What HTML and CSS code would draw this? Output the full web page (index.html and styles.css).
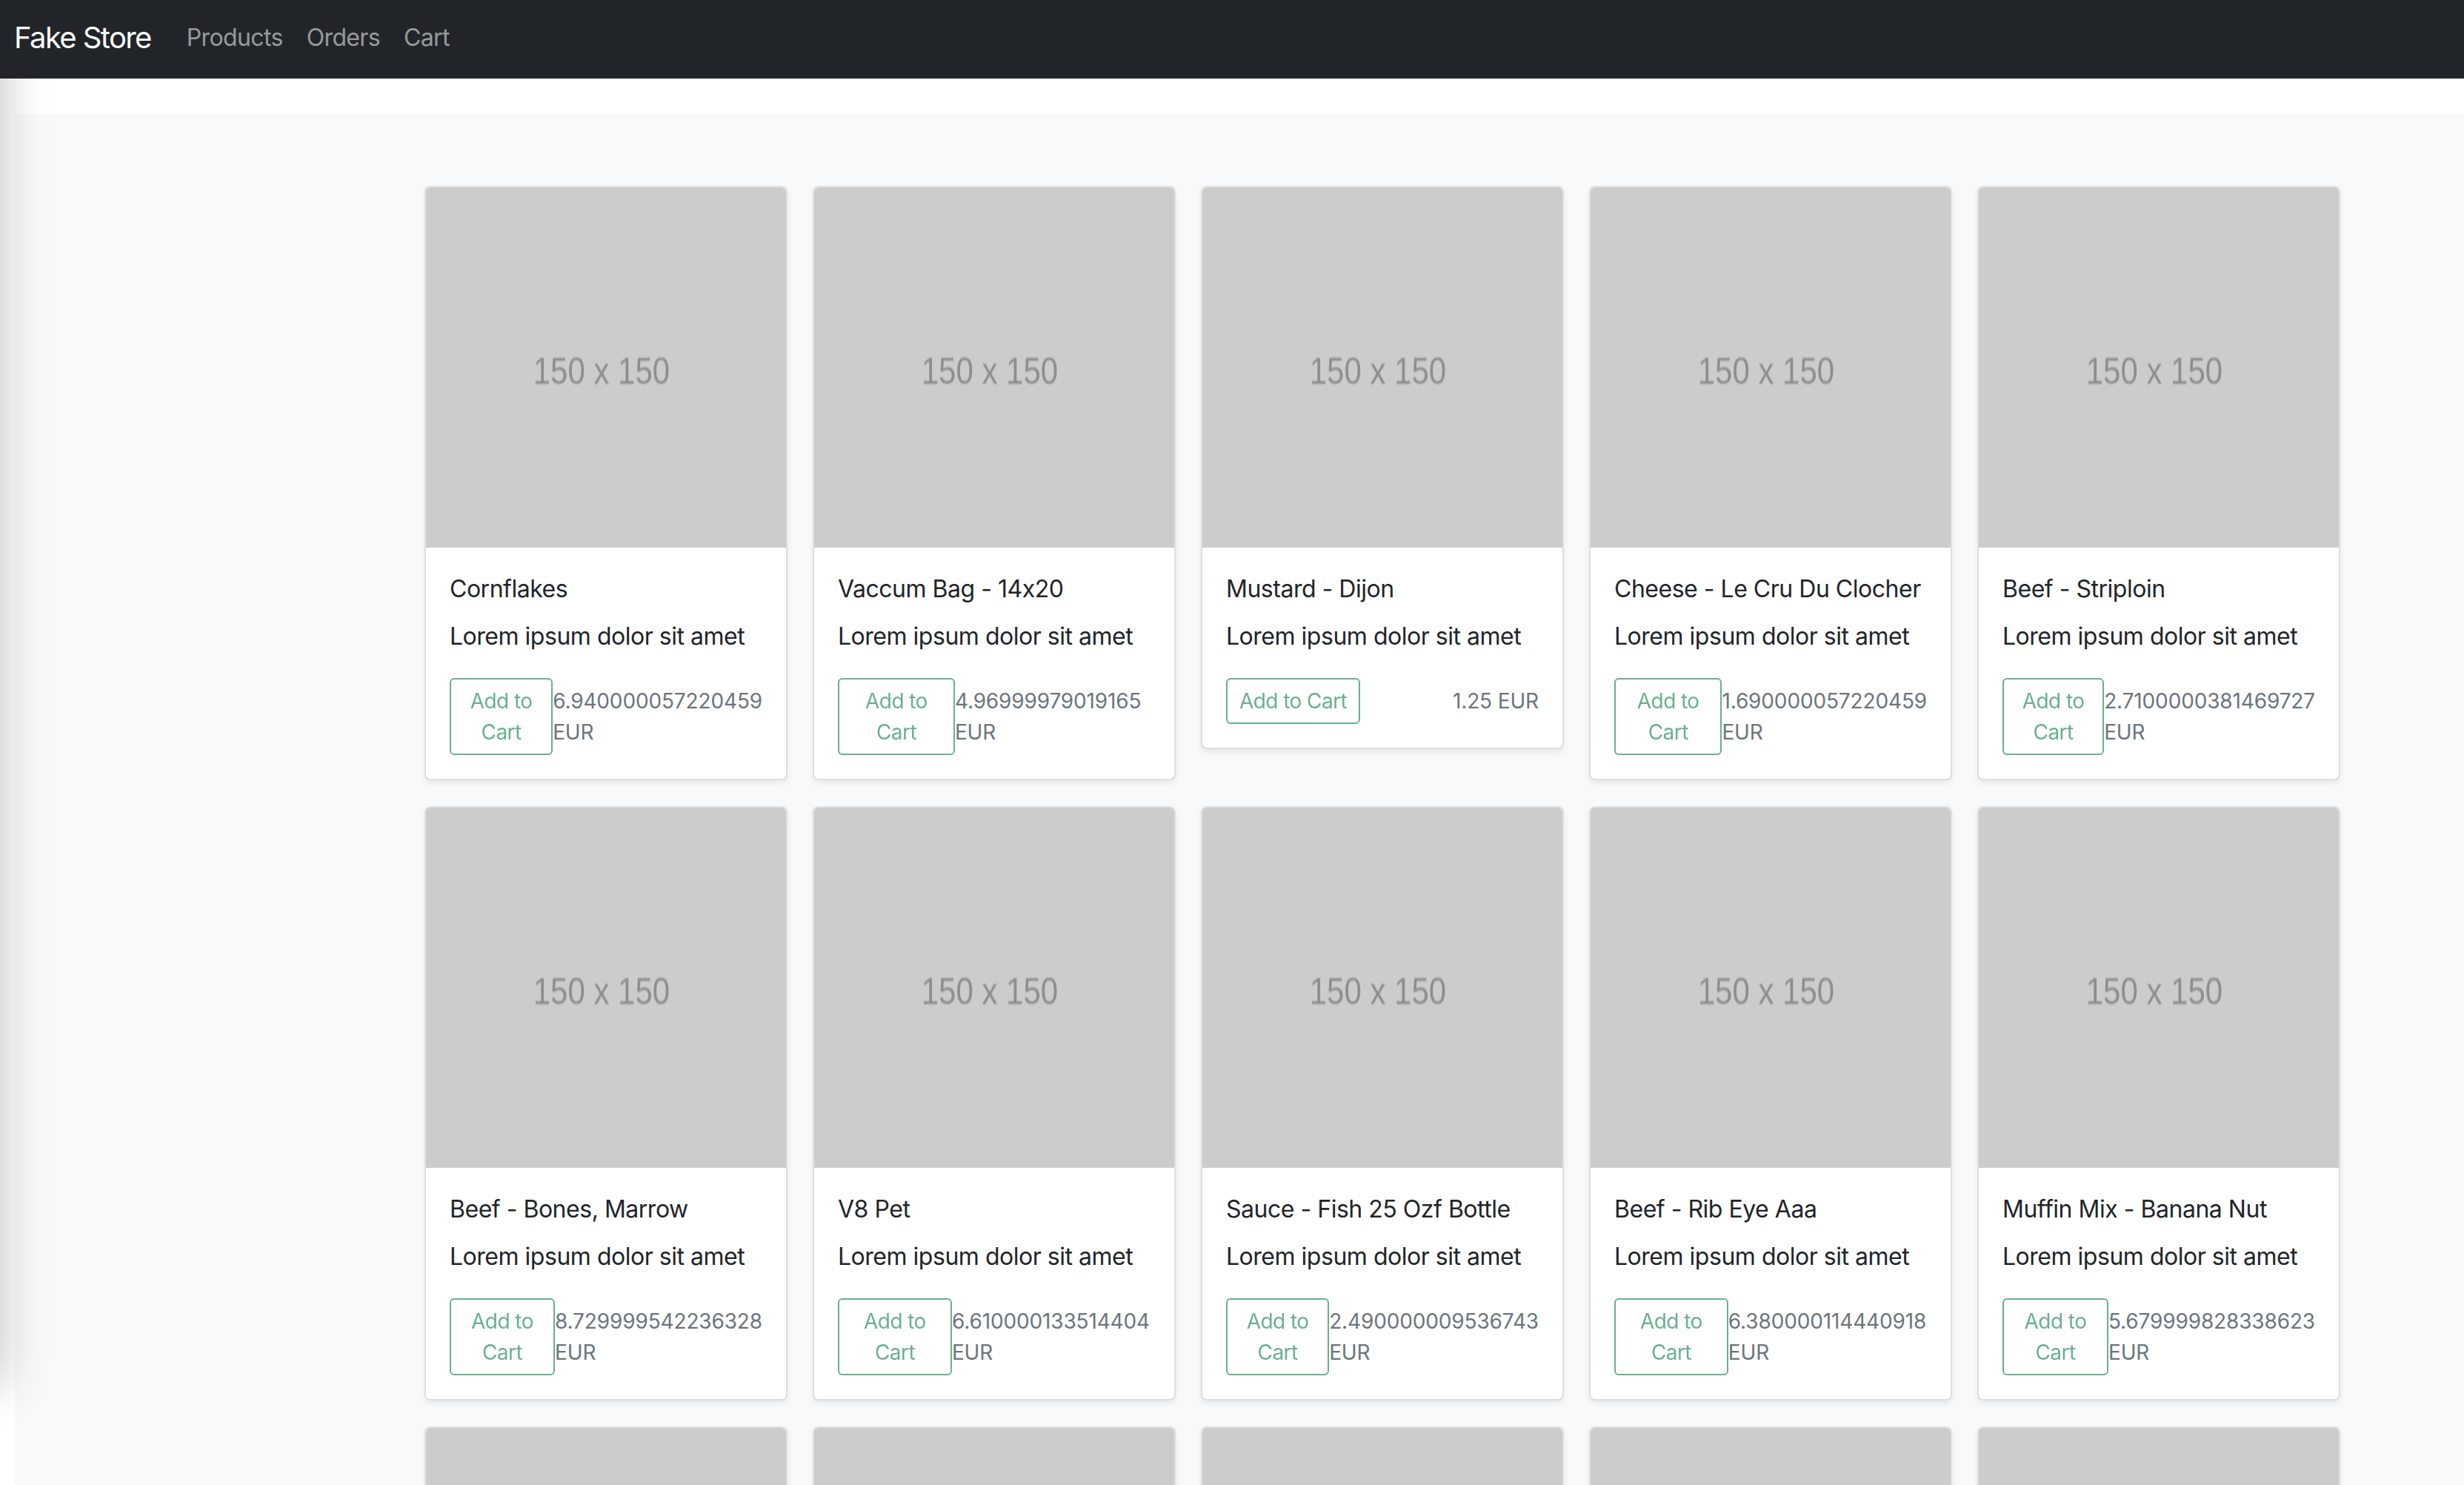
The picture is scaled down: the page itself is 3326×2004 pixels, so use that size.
FILE: index.html
```html
<!DOCTYPE html>
<html lang="en">
<head>
<meta charset="utf-8">
<title>Fake Store</title>
<link rel="stylesheet" href="styles.css">
</head>
<body>
<nav class="navbar">
  <a class="brand" href="#">Fake Store</a>
  <ul class="nav">
    <li><a class="nav-link" href="#">Products</a></li>
    <li><a class="nav-link" href="#">Orders</a></li>
    <li><a class="nav-link" href="#">Cart</a></li>
  </ul>
</nav>
<div class="edge-shadow"></div>
<main class="main">
  <div class="grid">
    <div class="card">
      <div class="thumb"><span>150 x 150</span></div>
      <div class="card-body">
        <h5 class="card-title">Cornflakes</h5>
        <p class="card-text">Lorem ipsum dolor sit amet</p>
        <div class="card-actions"><button class="btn" disabled>Add to Cart</button><span class="price">6.940000057220459 EUR</span></div>
      </div>
    </div>
    <div class="card">
      <div class="thumb"><span>150 x 150</span></div>
      <div class="card-body">
        <h5 class="card-title">Vaccum Bag - 14x20</h5>
        <p class="card-text">Lorem ipsum dolor sit amet</p>
        <div class="card-actions"><button class="btn" disabled>Add to Cart</button><span class="price">4.96999979019165 EUR</span></div>
      </div>
    </div>
    <div class="card">
      <div class="thumb"><span>150 x 150</span></div>
      <div class="card-body">
        <h5 class="card-title">Mustard - Dijon</h5>
        <p class="card-text">Lorem ipsum dolor sit amet</p>
        <div class="card-actions"><button class="btn" disabled>Add to Cart</button><span class="price">1.25 EUR</span></div>
      </div>
    </div>
    <div class="card">
      <div class="thumb"><span>150 x 150</span></div>
      <div class="card-body">
        <h5 class="card-title">Cheese - Le Cru Du Clocher</h5>
        <p class="card-text">Lorem ipsum dolor sit amet</p>
        <div class="card-actions"><button class="btn" disabled>Add to Cart</button><span class="price">1.690000057220459 EUR</span></div>
      </div>
    </div>
    <div class="card">
      <div class="thumb"><span>150 x 150</span></div>
      <div class="card-body">
        <h5 class="card-title">Beef - Striploin</h5>
        <p class="card-text">Lorem ipsum dolor sit amet</p>
        <div class="card-actions"><button class="btn" disabled>Add to Cart</button><span class="price">2.7100000381469727 EUR</span></div>
      </div>
    </div>
    <div class="card">
      <div class="thumb"><span>150 x 150</span></div>
      <div class="card-body">
        <h5 class="card-title">Beef - Bones, Marrow</h5>
        <p class="card-text">Lorem ipsum dolor sit amet</p>
        <div class="card-actions"><button class="btn" disabled>Add to Cart</button><span class="price">8.729999542236328 EUR</span></div>
      </div>
    </div>
    <div class="card">
      <div class="thumb"><span>150 x 150</span></div>
      <div class="card-body">
        <h5 class="card-title">V8 Pet</h5>
        <p class="card-text">Lorem ipsum dolor sit amet</p>
        <div class="card-actions"><button class="btn" disabled>Add to Cart</button><span class="price">6.610000133514404 EUR</span></div>
      </div>
    </div>
    <div class="card">
      <div class="thumb"><span>150 x 150</span></div>
      <div class="card-body">
        <h5 class="card-title">Sauce - Fish 25 Ozf Bottle</h5>
        <p class="card-text">Lorem ipsum dolor sit amet</p>
        <div class="card-actions"><button class="btn" disabled>Add to Cart</button><span class="price">2.490000009536743 EUR</span></div>
      </div>
    </div>
    <div class="card">
      <div class="thumb"><span>150 x 150</span></div>
      <div class="card-body">
        <h5 class="card-title">Beef - Rib Eye Aaa</h5>
        <p class="card-text">Lorem ipsum dolor sit amet</p>
        <div class="card-actions"><button class="btn" disabled>Add to Cart</button><span class="price">6.380000114440918 EUR</span></div>
      </div>
    </div>
    <div class="card">
      <div class="thumb"><span>150 x 150</span></div>
      <div class="card-body">
        <h5 class="card-title">Muffin Mix - Banana Nut</h5>
        <p class="card-text">Lorem ipsum dolor sit amet</p>
        <div class="card-actions"><button class="btn" disabled>Add to Cart</button><span class="price">5.679999828338623 EUR</span></div>
      </div>
    </div>
    <div class="card"><div class="thumb"><span>150 x 150</span></div></div>
    <div class="card"><div class="thumb"><span>150 x 150</span></div></div>
    <div class="card"><div class="thumb"><span>150 x 150</span></div></div>
    <div class="card"><div class="thumb"><span>150 x 150</span></div></div>
    <div class="card"><div class="thumb"><span>150 x 150</span></div></div>
  </div>
</main>
</body>
</html>
```
FILE: styles.css
```css
html, body {
  margin: 0;
  padding: 0;
}
body {
  background: #fff;
  font-family: Inter, "Liberation Sans", sans-serif;
  font-feature-settings: "calt" 0;
  letter-spacing: -0.03em;
  color: #212529;
  height: 2004px;
  overflow: hidden;
}
.navbar {
  position: relative;
  z-index: 2;
  height: 106px;
  box-sizing: border-box;
  background: #212529;
  display: flex;
  align-items: center;
  padding: 0 0 4px 19px;
}
.brand {
  color: #fff;
  font-size: 40px;
  line-height: 60px;
  text-decoration: none;
  margin-right: 32px;
  letter-spacing: -0.04em;
}
.nav {
  list-style: none;
  margin: 0;
  padding: 0;
  display: flex;
}
.nav-link {
  display: block;
  padding: 0 16px;
  font-size: 32px;
  line-height: 48px;
  letter-spacing: -0.02em;
  color: rgba(255, 255, 255, 0.55);
  text-decoration: none;
}
.edge-shadow {
  position: absolute;
  z-index: 1;
  left: -200px;
  top: 0;
  width: 200px;
  height: 1870px;
  box-shadow: 0 0 60px rgba(0, 0, 0, 0.26);
}
.main {
  margin: 48px 0 0 20px;
  background: #f8f9fa;
  padding: 97px 0 0 553px;
  min-height: 1900px;
}
.grid {
  display: grid;
  grid-template-columns: repeat(5, 490px);
  column-gap: 34px;
  row-gap: 35px;
  align-items: start;
}
.card {
  background: #fff;
  border: 2px solid rgba(0, 0, 0, 0.125);
  border-radius: 8px;
  box-shadow: 0 4px 8px rgba(0, 0, 0, 0.075);
  overflow: hidden;
}
.thumb {
  height: 486px;
  background: #ccc;
  display: flex;
  align-items: center;
  justify-content: center;
}
.thumb span {
  font-family: "Liberation Sans", Arial, sans-serif;
  font-size: 50px;
  letter-spacing: 0;
  color: #8e8e8e;
  filter: blur(0.8px);
  transform: scaleX(0.84);
  padding: 10px 14px 0 0;
}
.card-body {
  padding: 32px;
}
.card-title {
  margin: 0 0 16px;
  font-size: 32px;
  font-weight: 400;
  line-height: 48px;
}
.card-text {
  margin: 0 0 32px;
  font-size: 32px;
  line-height: 48px;
}
.card-actions {
  display: flex;
  justify-content: space-between;
  align-items: center;
}
.btn {
  font-family: Inter, "Liberation Sans", sans-serif;
  font-feature-settings: "calt" 0;
  font-size: 28px;
  line-height: 42px;
  letter-spacing: -0.02em;
  padding: 8px 16px;
  border: 2px solid #198754;
  border-radius: 6px;
  color: #198754;
  background: transparent;
  opacity: 0.65;
  text-align: center;
}
.price {
  font-size: 28px;
  line-height: 42px;
  letter-spacing: -0.005em;
  color: #6c757d;
}
```
